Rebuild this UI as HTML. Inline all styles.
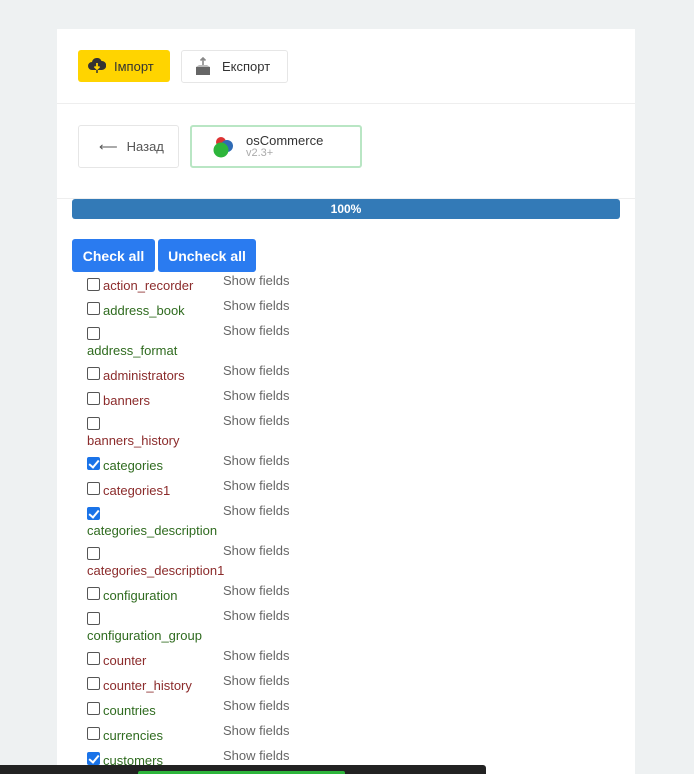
<!DOCTYPE html>
<html style="height:774px;overflow:hidden"><head><meta charset="utf-8"><style>
*{box-sizing:border-box;margin:0;padding:0}
body{width:694px;height:774px;overflow:hidden;background:#eef1f2;font-family:"Liberation Sans",Arial,sans-serif;position:relative}
.card{position:absolute;left:57px;top:29px;width:578px;height:745px;background:#fff}
.a{position:absolute}
.btn{position:absolute;border-radius:3px;font-size:13px;display:flex;align-items:center}
.cb{position:absolute;left:87px;width:13px;height:13px;border:1px solid #555;border-radius:2px;background:#fff}
.cb.on{background:#1a73e8;border-color:#1a73e8}
.cb.on::after{content:"";position:absolute;left:3px;top:0px;width:4px;height:8px;border:solid #fff;border-width:0 2px 2px 0;transform:rotate(40deg)}
.l{position:absolute;font-size:13px;line-height:15px}
.r{color:#8b2b2b}.g{color:#2f6b1f}
.sf{position:absolute;left:223px;font-size:13px;color:#666;line-height:15px}
</style></head><body>
<div class="card"></div>
<div class="btn" style="left:78px;top:50px;width:92px;height:32px;background:#ffd400;padding-left:10px">
<svg width="18" height="16" viewBox="0 0 18 16"><path d="M4 12a4 4 0 0 1 0-8 5 5 0 0 1 9.5-1A3.7 3.7 0 0 1 14 12z" fill="#333"/><path d="M9 5v6M6.5 8.5 9 11l2.5-2.5" stroke="#ffd400" stroke-width="1.8" fill="none"/><path d="M9 12v3" stroke="#333" stroke-width="1.5"/></svg>
<span style="margin-left:8px;color:#333">Імпорт</span></div>
<div class="btn" style="left:181px;top:50px;width:107px;height:33px;border:1px solid #e6e6e6;padding-left:12px">
<svg width="18" height="20" viewBox="0 0 18 20"><path d="M9 1v8M6.5 3.5 9 1l2.5 2.5" stroke="#888" stroke-width="1.6" fill="none"/><path d="M2 10h14v8H2z" fill="#666"/><path d="M2 10l3-2h8l3 2z" fill="#bbb"/></svg>
<span style="margin-left:10px;color:#333">Експорт</span></div>
<div class="a" style="left:57px;top:103px;width:578px;height:1px;background:#eee"></div>
<div class="btn" style="left:78px;top:125px;width:101px;height:43px;border:1px solid #e6e6e6;padding-left:20px;color:#555">
<span style="font-size:13px;margin-right:9px">⟵</span>Назад</div>
<div class="btn" style="left:190px;top:125px;width:172px;height:43px;border:2px solid #b9e6c4;padding-left:20px">
<svg width="24" height="26" viewBox="0 0 24 26"><circle cx="9" cy="8" r="5" fill="#d33"/><circle cx="15" cy="12" r="6" fill="#2f6bb5"/><circle cx="9" cy="16" r="7.5" fill="#2db53b"/></svg>
<div style="margin-left:10px;line-height:12px"><div style="color:#333;font-size:13px">osCommerce</div><div style="color:#aaa;font-size:11px">v2.3+</div></div></div>
<div class="a" style="left:57px;top:198px;width:578px;height:1px;background:#eee"></div>
<div class="a" style="left:72px;top:199px;width:548px;height:20px;background:#337ab7;border-radius:3px;color:#fff;font-size:12px;font-weight:bold;text-align:center;line-height:20px">100%</div>
<div class="btn" style="left:72px;top:239px;width:83px;height:33px;background:#2a7bf0;color:#fff;font-weight:bold;font-size:14px;justify-content:center">Check all</div>
<div class="btn" style="left:158px;top:239px;width:98px;height:33px;background:#2a7bf0;color:#fff;font-weight:bold;font-size:14px;justify-content:center">Uncheck all</div>

<div class="cb" style="top:278px"></div><div class="l r" style="left:103px;top:278px">action_recorder</div><div class="sf" style="top:273px">Show fields</div>
<div class="cb" style="top:302px"></div><div class="l g" style="left:103px;top:303px">address_book</div><div class="sf" style="top:298px">Show fields</div>
<div class="cb" style="top:327px"></div><div class="l g" style="left:87px;top:343px">address_format</div><div class="sf" style="top:323px">Show fields</div>
<div class="cb" style="top:367px"></div><div class="l r" style="left:103px;top:368px">administrators</div><div class="sf" style="top:363px">Show fields</div>
<div class="cb" style="top:392px"></div><div class="l r" style="left:103px;top:393px">banners</div><div class="sf" style="top:388px">Show fields</div>
<div class="cb" style="top:417px"></div><div class="l r" style="left:87px;top:433px">banners_history</div><div class="sf" style="top:413px">Show fields</div>
<div class="cb on" style="top:457px"></div><div class="l g" style="left:103px;top:458px">categories</div><div class="sf" style="top:453px">Show fields</div>
<div class="cb" style="top:482px"></div><div class="l r" style="left:103px;top:483px">categories1</div><div class="sf" style="top:478px">Show fields</div>
<div class="cb on" style="top:507px"></div><div class="l g" style="left:87px;top:523px">categories_description</div><div class="sf" style="top:503px">Show fields</div>
<div class="cb" style="top:547px"></div><div class="l r" style="left:87px;top:563px">categories_description1</div><div class="sf" style="top:543px">Show fields</div>
<div class="cb" style="top:587px"></div><div class="l g" style="left:103px;top:588px">configuration</div><div class="sf" style="top:583px">Show fields</div>
<div class="cb" style="top:612px"></div><div class="l g" style="left:87px;top:628px">configuration_group</div><div class="sf" style="top:608px">Show fields</div>
<div class="cb" style="top:652px"></div><div class="l r" style="left:103px;top:653px">counter</div><div class="sf" style="top:648px">Show fields</div>
<div class="cb" style="top:677px"></div><div class="l r" style="left:103px;top:678px">counter_history</div><div class="sf" style="top:673px">Show fields</div>
<div class="cb" style="top:702px"></div><div class="l g" style="left:103px;top:703px">countries</div><div class="sf" style="top:698px">Show fields</div>
<div class="cb" style="top:727px"></div><div class="l g" style="left:103px;top:728px">currencies</div><div class="sf" style="top:723px">Show fields</div>
<div class="cb on" style="top:752px"></div><div class="l g" style="left:103px;top:753px">customers</div><div class="sf" style="top:748px">Show fields</div>

<div class="a" style="left:0;top:765px;width:486px;height:9px;background:#222;border-radius:0 3px 0 0"></div>
<div class="a" style="left:138px;top:771px;width:207px;height:3px;background:#2db53b;border-radius:2px 2px 0 0"></div>
</body></html>
